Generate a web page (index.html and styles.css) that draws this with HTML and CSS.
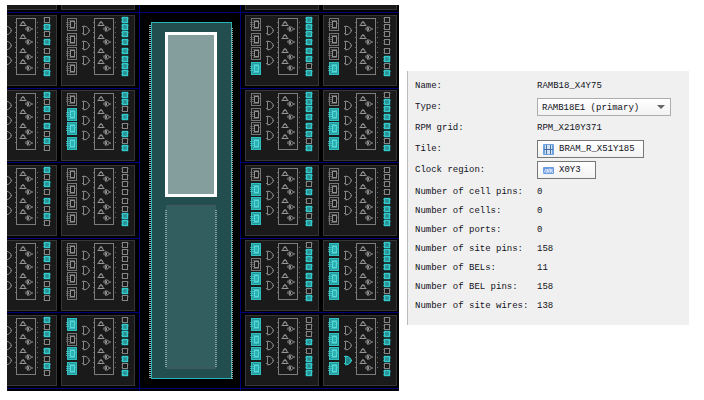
FILE: index.html
```html
<!DOCTYPE html>
<html lang="en">
<head>
<meta charset="utf-8">
<title>Site properties</title>
<link rel="stylesheet" href="styles.css">
</head>
<body>
<main class="workspace">
  <svg class="device" id="device" viewBox="7 5 392 386" role="img" aria-label="Device view">
    <defs>
      <g id="lut" class="lut">
        <rect class="body" x="6.5" y=".5" width="9" height="12"/>
        <rect class="core" x="9.5" y="3.5" width="4" height="6"/>
        <path class="wire" d="M5 4.5h4M5 6.5h4M5 8.5h4M13 5.5h2M8 2.5h6M8 10.5h6"/>
      </g>
      <g id="gate" class="gate">
        <path d="M22.5 -3.5h2.5l3 2.5v3l-3 2.5h-2.5zM21 -3.5h1.5M21 3.5h1.500M23 -4.5v1M23 4.5v1M28 .5h1"/>
      </g>
      <g id="mux" class="small"><path d="M-2.5 1.5h5l-1.2-2.8h-2.6zM-1-1.5l1-1.2 1 1.2M-3.5 1.5h1M2.500 1.500h1"/></g>
      <g id="xor" class="small"><path d="M-2-2h2.500l2 2-2 2h-2.500l1-2zM-.5-1v2M2.500 0h1.500M-3-1.500v2.500"/></g>
      <g id="arith">
        <path class="pins" d="M32.500 7v50M54.500 7v50"/>
        <rect class="frame" x="33.500" y="3.500" width="19" height="56"/>
        <use href="#mux" x="40" y="9"/><use href="#xor" x="46" y="14"/>
        <use href="#mux" x="40" y="22"/><use href="#xor" x="46" y="27"/>
        <use href="#mux" x="40" y="36"/><use href="#xor" x="46" y="42"/>
        <use href="#mux" x="40" y="47"/><use href="#xor" x="46" y="53"/>
      </g>
      <g id="ff" class="ff">
        <rect x="61.5" y=".5" width="5" height="5"/>
        <path d="M60.5 1.500h1M60.500 4.500h1M66.500 1.500h1"/>
      </g>
    </defs>
    <rect class="die" x="7" y="5" width="392" height="386"/>
    <g id="slices"></g>
    <path class="tiles" d="M7 12.500H399M7 88.500H399M7 162.500H399M7 238.500H399M7 312.500H399M7 388.500H399"/>
    <rect class="die" x="140" y="13" width="100" height="375"/>
    <path class="tiles" d="M139.500 5V391M240.500 5V391"/>
    <rect class="bram" x="151.500" y="22.500" width="80" height="356"/>
    <path class="bram-pins" d="M150 25V379M232 28V379"/>
    <rect class="half" x="166" y="205" width="50" height="164"/>
    <path class="half-edge" d="M166 205.500h50M166 368h50"/>
    <path class="half-pins" d="M166 210V367M216 210V367"/>
    <rect class="selected" x="166.500" y="33.500" width="49" height="162"/>
  </svg>

  <aside class="properties">
    <dl class="fields">
      <dt>Name:</dt><dd>RAMB18_X4Y75</dd>
      <dt><label for="type">Type:</label></dt>
      <dd>
        <span class="picker">
          <select id="type"><option>RAMB18E1 (primary)</option></select>
        </span>
      </dd>
      <dt>RPM grid:</dt><dd>RPM_X210Y371</dd>
      <dt id="tile-label">Tile:</dt>
      <dd>
        <button type="button" class="link tile" aria-describedby="tile-label">
          <svg class="icon" viewBox="0 0 11 11" aria-hidden="true">
            <rect width="11" height="11" rx="1" fill="#6ea3e0"/>
            <path d="M2 1h7v9H2z" fill="#d3e2f4"/>
            <path d="M3.500 1v9M7.500 1v9M1 5.500h9" fill="none" stroke="#48719f"/>
          </svg>BRAM_R_X51Y185</button>
      </dd>
      <dt id="clock-label">Clock region:</dt>
      <dd>
        <button type="button" class="link region" aria-describedby="clock-label">
          <svg class="icon" viewBox="0 0 11 11" aria-hidden="true">
            <rect x="0" y="2" width="11" height="7" rx="1" fill="#6b9be0"/>
            <path d="M1 7.500L3 4v3.500h1.500V4l1.500 3.500V4h1.500v3.500L9 4v3.500h1" fill="none" stroke="#e6effa" stroke-width=".8"/>
          </svg>X0Y3</button>
      </dd>
    </dl>
    <dl class="counts">
      <dt>Number of cell pins:</dt><dd>0</dd>
      <dt>Number of cells:</dt><dd>0</dd>
      <dt>Number of ports:</dt><dd>0</dd>
      <dt>Number of site pins:</dt><dd>158</dd>
      <dt>Number of BELs:</dt><dd>11</dd>
      <dt>Number of BEL pins:</dt><dd>158</dd>
      <dt>Number of site wires:</dt><dd>138</dd>
    </dl>
  </aside>
</main>
<script src="device.js"></script>
</body>
</html>
```
FILE: styles.css
```css
* { box-sizing: border-box; }

body {
  margin: 0;
  background: #fff;
  color: #10101a;
  font: 9px/16px "Liberation Mono", monospace;
}

.workspace {
  display: grid;
  grid-template-columns: 392fr 282fr;
  gap: 8px;
  align-items: center;
  padding: 5px 15px 0 7px;
}

/* Device view */
.device { display: block; width: 100%; }
.die { fill: #000; }
.tiles { stroke: #00007c; fill: none; }
.slice { fill: #1a1a1a; stroke: #363636; stroke-width: 1; }

.lut .body { fill: none; stroke: #757575; }
.lut .core { fill: none; stroke: #8f8f8f; }
.lut .wire { fill: none; stroke: #747474; stroke-width: .7; }
.gate { fill: none; stroke: #858585; stroke-width: 1; }
.small { fill: none; stroke: #a8a8a8; stroke-width: .9; }
.frame { fill: none; stroke: #7c7c7c; }
.pins { fill: none; stroke: #6a6a6a; stroke-dasharray: 1 4; }
.ff rect { fill: none; stroke: #868686; }
.ff path { fill: none; stroke: #777; }

.on-lut .body { fill: #249a9c; stroke: #2fbfc1; }
.on-lut .core { fill: #2cb2b4; stroke: #55d8d8; }
.on-lut .wire { stroke: #4bcaca; }
.on-gate { fill: #1f8587; stroke: #35cccc; }
.on-ff rect { fill: #2b8f92; stroke: #32cbcd; stroke-width: 1.4; }
.on-ff path { stroke: #30c3c5; }

.bram { fill: #234e50; stroke: #2bb3b4; }
.bram-pins { stroke: #8bb0b0; stroke-width: 2; stroke-dasharray: 1 1; }
.half { fill: #335e60; }
.half-edge { stroke: #44585c; stroke-width: 1; }
.half-pins { stroke: #86a2a3; stroke-width: 2; stroke-dasharray: 1 1; }
.selected { fill: #849e9e; stroke: #fff; stroke-width: 3; }

/* Property panel */
.properties {
  padding: 6px 18px 11px 7px;
  background: #f0f0f0;
  border-left: 1px solid #bcbcbc;
}

dl {
  display: grid;
  grid-template-columns: 122px 1fr;
  row-gap: 3px;
  margin: 0;
}

dd { margin: 0; }
.fields { grid-auto-rows: 18px; line-height: 18px; }
.counts { grid-auto-rows: 16px; margin-top: 5px; }

.picker { position: relative; display: block; }
.picker::after {
  content: "";
  position: absolute;
  top: 7px;
  right: 6px;
  border: 4px solid transparent;
  border-top-color: #666;
  border-bottom: 0;
  pointer-events: none;
}

select, .link {
  height: 18px;
  margin: 0;
  color: inherit;
  font: inherit;
  background: linear-gradient(#fff, #f2f2f2);
}

select {
  display: block;
  appearance: none;
  width: 100%;
  padding: 0 4px;
  border: 1px solid #adadad;
  border-radius: 0;
}

.link {
  display: flex;
  align-items: center;
  gap: 5px;
  padding: 0 8px 0 5px;
  border: 1px solid #777;
}
.region { padding-right: 14px; }
.icon { width: 11px; height: 11px; flex: none; }
```
FILE: device.js
```js
// Slice occupancy: LUTs, flip-flops and carry gates, one digit per element, top to bottom.
const columns = [
  { x: -17, rows: [
    ["0000", "01010101"], ["0000", "10101010"], ["0000", "10101010"],
    ["0000", "10101010"], ["0000", "10101010"]] },
  { x: 61, rows: [
    ["0000", "11111111"], ["0111", "11010101"], ["0000", "00000011"],
    ["0000", "00000010"], ["1011", "01110101"]] },
  { x: 245, rows: [
    ["0001", "11111101"], ["0001", "11111101"], ["0111", "11010101"],
    ["1011", "01111101"], ["1111", "00010111"]] },
  { x: 323, rows: [
    ["0001", "00000101"], ["0111", "01111101"], ["0000", "00001111"],
    ["1111", "11111101"], ["1111", "00110101", "001"]] }
];
const lutY = [3, 18, 32, 47];
const gateY = [15, 30, 45];
const ffY = [2, 9, 16, 24, 33, 41, 48, 55];

// Shapes are cloned so that the state class can restyle their parts.
function place(id, y, on) {
  const node = document.getElementById(id).cloneNode(true);
  node.removeAttribute("id");
  node.setAttribute("transform", `translate(0 ${y})`);
  if (on) node.classList.add("on-" + id);
  return node;
}

function group(x, y) {
  const g = document.createElementNS("http://www.w3.org/2000/svg", "g");
  g.setAttribute("transform", `translate(${x} ${y})`);
  const r = document.createElementNS("http://www.w3.org/2000/svg", "rect");
  r.setAttribute("class", "slice");
  r.setAttribute("x", 0.5);
  r.setAttribute("y", 0.5);
  r.setAttribute("width", 73);
  r.setAttribute("height", 70);
  g.append(r);
  return g;
}

const slices = document.getElementById("slices");
for (const { x, rows } of columns) {
  slices.append(group(x, -61));
  rows.forEach(([luts, ffs, gates = "000"], row) => {
    const g = group(x, 15 + row * 75);
    lutY.forEach((y, i) => g.append(place("lut", y, luts[i] === "1")));
    gateY.forEach((y, i) => g.append(place("gate", y, gates[i] === "1")));
    g.append(place("arith", 0, false));
    // Flip-flops go last so that their outlines stay on top.
    ffY.forEach((y, i) => g.append(place("ff", y, ffs[i] === "1")));
    slices.append(g);
  });
}
```
